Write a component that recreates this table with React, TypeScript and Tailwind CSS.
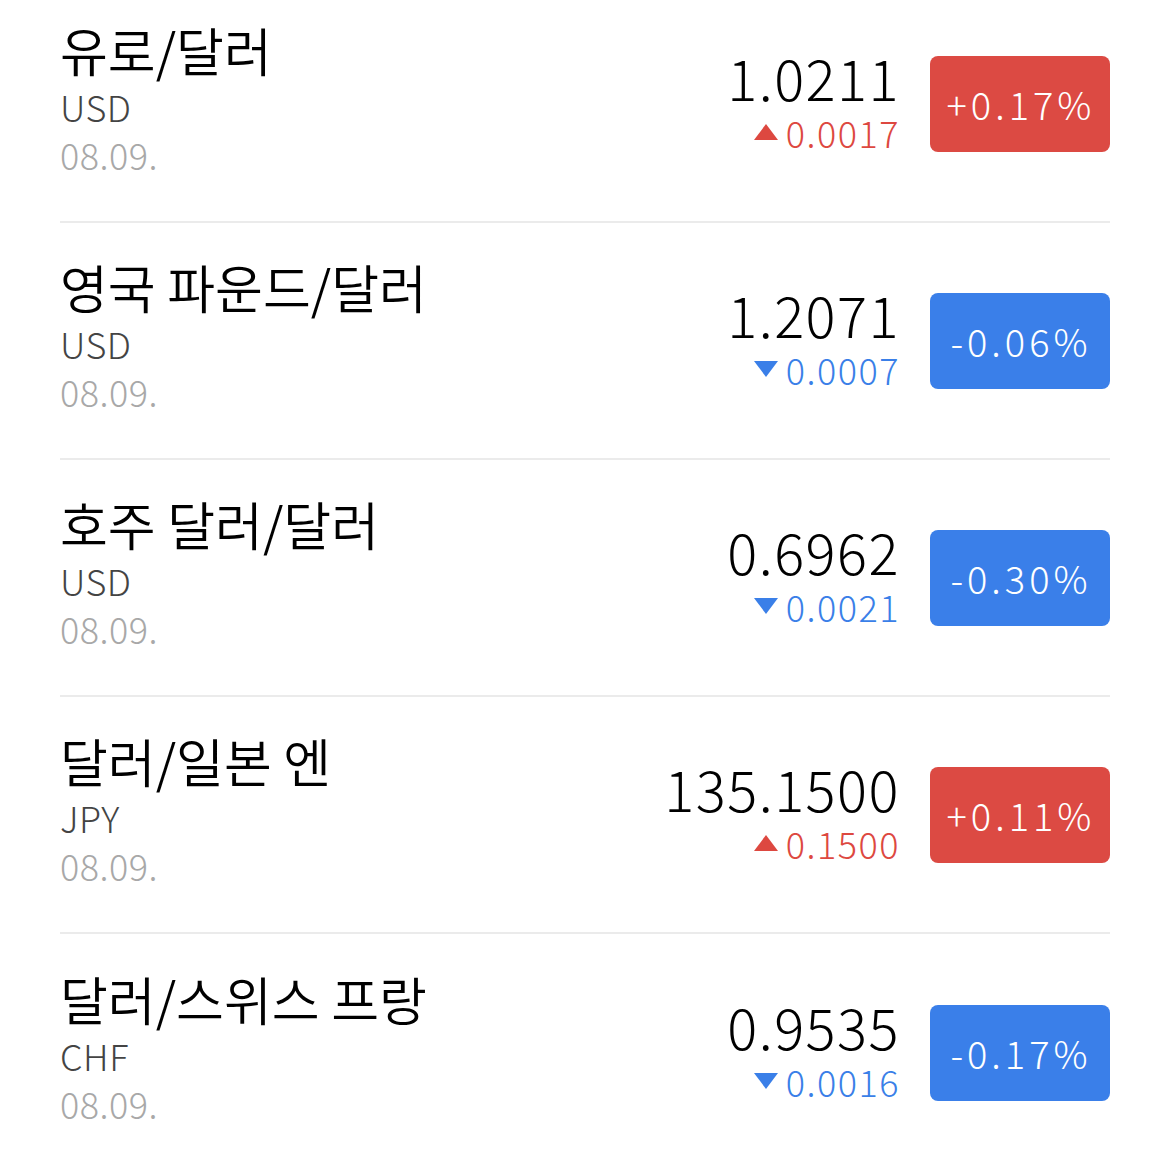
import React from 'react'

type Rate = {
  name: string
  code: string
  date: string
  price: string
  diff: string
  pct: string
  up: boolean
}

const rates: Rate[] = [
  { name: '유로/달러', code: 'USD', date: '08.09.', price: '1.0211', diff: '0.0017', pct: '+0.17%', up: true },
  { name: '영국 파운드/달러', code: 'USD', date: '08.09.', price: '1.2071', diff: '0.0007', pct: '-0.06%', up: false },
  { name: '호주 달러/달러', code: 'USD', date: '08.09.', price: '0.6962', diff: '0.0021', pct: '-0.30%', up: false },
  { name: '달러/일본 엔', code: 'JPY', date: '08.09.', price: '135.1500', diff: '0.1500', pct: '+0.11%', up: true },
  { name: '달러/스위스 프랑', code: 'CHF', date: '08.09.', price: '0.9535', diff: '0.0016', pct: '-0.17%', up: false },
]

function Arrow({ up }: { up: boolean }) {
  return (
    <svg width="24" height="20" viewBox="0 0 24 20" className={up ? 'fill-[#dd4840]' : 'fill-[#3a7fe8]'}>
      {up ? <polygon points="12,2 24,18 0,18" /> : <polygon points="0,2 24,2 12,18" />}
    </svg>
  )
}

export default function App() {
  return (
    <div
      className="w-[1170px] h-[1166px] overflow-hidden bg-white"
      style={{ fontFamily: '"Noto Sans CJK KR", "Noto Sans", sans-serif' }}
    >
      <div className="-mt-[14px] px-[60px]">
        {rates.map((r, i) => (
          <div
            key={r.name}
            className={`h-[237px] flex items-center justify-between ${i < rates.length - 1 ? 'border-b-2 border-[#ebebeb]' : ''}`}
          >
            <div className="flex flex-col -mt-[12px] font-light">
              <span className="text-[52px] leading-[64px] text-black font-[350]">{r.name}</span>
              <span className="text-[36px] leading-[48px] text-[#444] tracking-[0.5px]">{r.code}</span>
              <span className="text-[36px] leading-[48px] text-[#a8a8a8] tracking-[0.5px]">{r.date}</span>
            </div>
            <div className="flex items-center gap-[30px]">
              <div className="flex flex-col items-end -mt-[10px] font-light">
                <span className="text-[56px] leading-[62px] text-black tracking-[1.5px]">{r.price}</span>
                <span
                  className={`flex items-center gap-[8px] mt-[4px] text-[36px] leading-[40px] tracking-[1.5px] ${r.up ? 'text-[#dd4840]' : 'text-[#3a7fe8]'}`}
                >
                  <Arrow up={r.up} />
                  {r.diff}
                </span>
              </div>
              <div
                className={`w-[180px] h-[96px] rounded-[8px] flex items-center justify-center text-white text-[38px] font-light tracking-[4px] pl-[2px] ${r.up ? 'bg-[#dc4a43]' : 'bg-[#3a7fe9]'}`}
              >
                {r.pct}
              </div>
            </div>
          </div>
        ))}
      </div>
    </div>
  )
}
